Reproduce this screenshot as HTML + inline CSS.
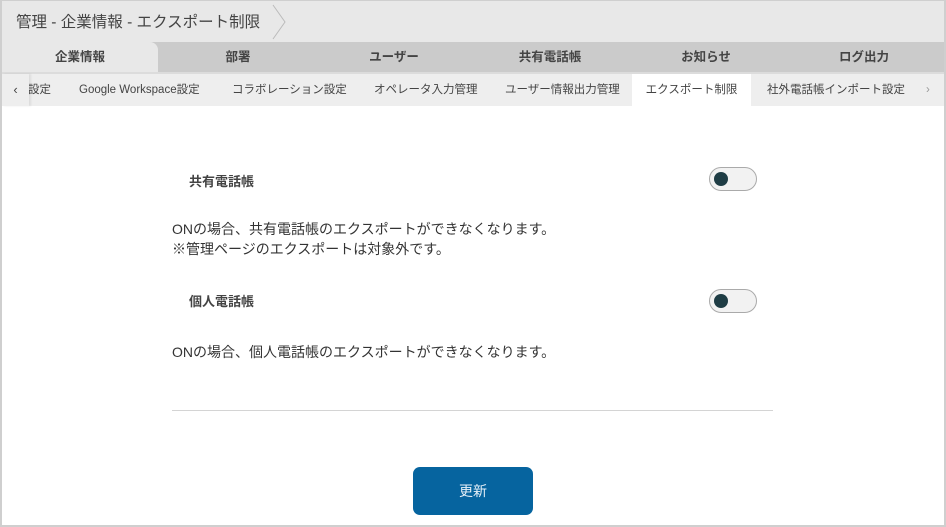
<!DOCTYPE html>
<html><head><meta charset="utf-8"><style>
*{box-sizing:border-box;margin:0;padding:0}
body{width:946px;height:527px;overflow:hidden;background:#fff;font-family:"Liberation Sans","Noto Sans CJK JP",sans-serif;color:#333}
.frame{position:absolute;left:0;top:0;width:946px;height:527px;border:2px solid #cfcfcf;border-top:1px solid #cfcfcf}
.hdr{position:absolute;left:2px;top:1px;width:942px;height:41px;background:#e8e8e8;font-size:15.5px;color:#444}
.hdr span{position:absolute;left:14px;top:9px}
.chev{position:absolute;left:268px;top:2px}
.tabs{position:absolute;left:2px;top:42px;width:942px;height:32px;background:#cbcbcb;border-bottom:2px solid #dcdcdc}
.tab{position:absolute;top:0;height:30px;line-height:30px;font-size:12.5px;font-weight:bold;color:#444;text-align:center}
.act{background:#e8e8e8;left:0;width:156px;border-radius:0 8px 0 0}
.sub{position:absolute;left:2px;top:74px;width:942px;height:32px;background:#eeeeee;font-size:11.5px;color:#444}
.sub div{position:absolute;top:0;line-height:32px}
.lbl{position:absolute;left:189px;font-size:13px;font-weight:bold;color:#444}
.txt{position:absolute;left:172px;font-size:14px;color:#333;line-height:20px}
.tg{position:absolute;left:709px;width:48px;height:24px;border:1.5px solid #aaa;border-radius:12px;background:#f2f2f2}
.tg:after{content:"";position:absolute;left:4px;top:4px;width:14px;height:14px;border-radius:50%;background:#1f3d45}
.hr{position:absolute;left:172px;top:410px;width:601px;height:1px;background:#d4d4d4}
.btn{position:absolute;left:413px;top:467px;width:120px;height:48px;background:#06649f;border-radius:7px;color:#e6f0f8;font-size:14px;text-align:center;line-height:48px}
</style></head><body>
<div class="hdr"><span>管理 - 企業情報 - エクスポート制限</span>
<svg class="chev" width="20" height="38"><path d="M3 2 L15 19 L3 36" fill="none" stroke="#bbb" stroke-width="1"/></svg></div>
<div class="tabs">
<div class="tab act">企業情報</div>
<div class="tab" style="left:158px;width:156px">部署</div>
<div class="tab" style="left:314px;width:156px">ユーザー</div>
<div class="tab" style="left:470px;width:156px">共有電話帳</div>
<div class="tab" style="left:626px;width:156px">お知らせ</div>
<div class="tab" style="left:782px;width:160px">ログ出力</div>
</div>
<div class="sub">
<div style="left:26px">設定</div>
<div style="left:0;width:27px;height:32px;background:#eee;text-align:center;font-size:13px;box-shadow:2px 0 2px rgba(0,0,0,0.08)">‹</div>
<div style="left:77px">Google Workspace設定</div>
<div style="left:230px">コラボレーション設定</div>
<div style="left:372px">オペレータ入力管理</div>
<div style="left:503px">ユーザー情報出力管理</div>
<div style="left:630px;width:119px;background:#fff;text-align:center">エクスポート制限</div>
<div style="left:765px">社外電話帳インポート設定</div>
<div style="left:924px;color:#999">›</div>
</div>
<div class="lbl" style="top:171px">共有電話帳</div>
<div class="tg" style="top:167px"></div>
<div class="txt" style="top:219px">ONの場合、共有電話帳のエクスポートができなくなります。<br>※管理ページのエクスポートは対象外です。</div>
<div class="lbl" style="top:291px">個人電話帳</div>
<div class="tg" style="top:289px"></div>
<div class="txt" style="top:342px">ONの場合、個人電話帳のエクスポートができなくなります。</div>
<div class="hr"></div>
<div class="btn">更新</div>
<div class="frame"></div>
</body></html>
